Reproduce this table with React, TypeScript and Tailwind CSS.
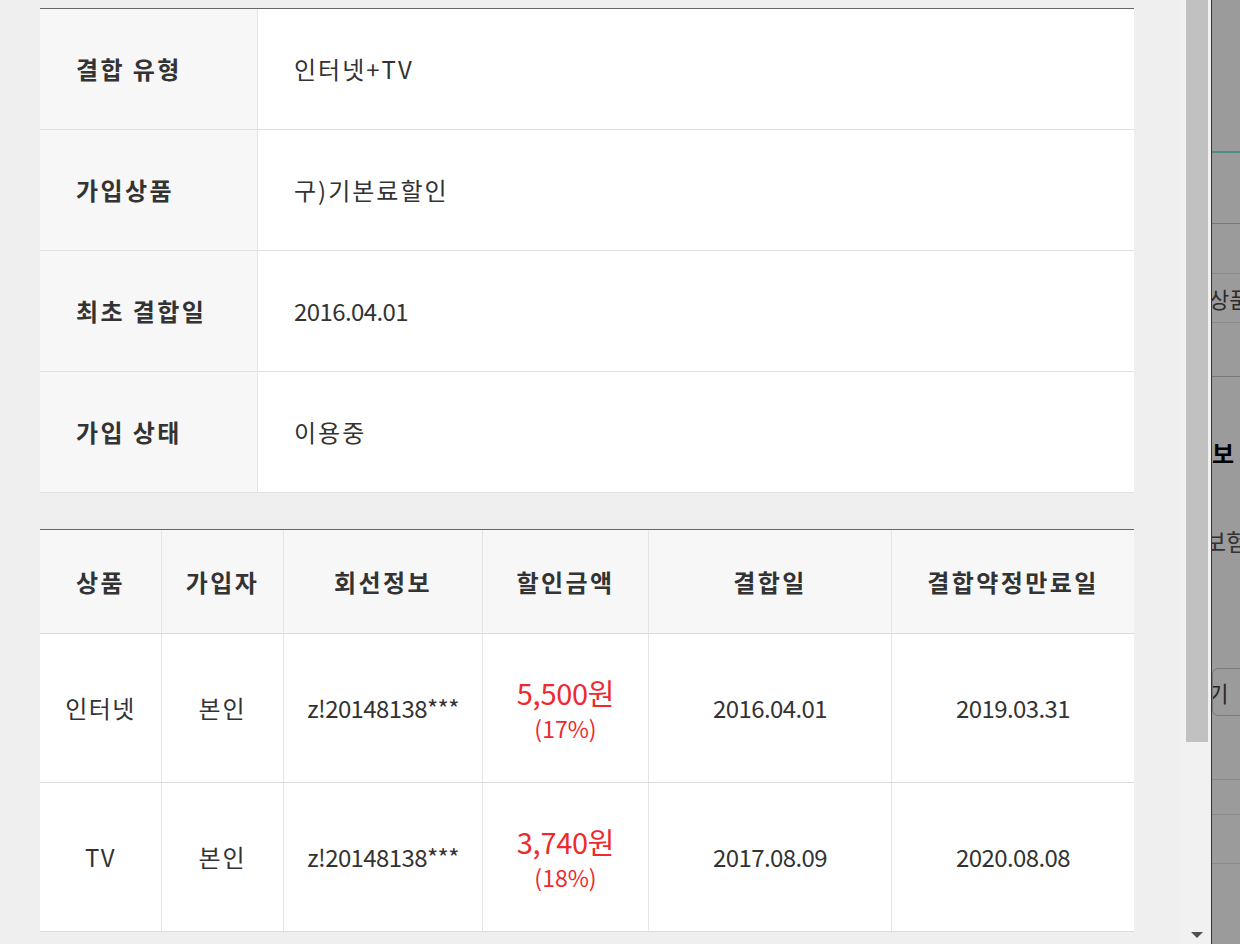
import React from "react";

const font = { fontFamily: '"Noto Sans CJK KR", "Noto Sans", sans-serif' };

type InfoRow = { label: string; value: string; numeric?: boolean };

const infoRows: InfoRow[] = [
  { label: "결합 유형", value: "인터넷+TV" },
  { label: "가입상품", value: "구)기본료할인" },
  { label: "최초 결합일", value: "2016.04.01", numeric: true },
  { label: "가입 상태", value: "이용중" },
];

type LineRow = {
  product: string;
  owner: string;
  line: string;
  amount: string;
  rate: string;
  joined: string;
  expires: string;
};

const lineRows: LineRow[] = [
  {
    product: "인터넷",
    owner: "본인",
    line: "z!20148138***",
    amount: "5,500원",
    rate: "(17%)",
    joined: "2016.04.01",
    expires: "2019.03.31",
  },
  {
    product: "TV",
    owner: "본인",
    line: "z!20148138***",
    amount: "3,740원",
    rate: "(18%)",
    joined: "2017.08.09",
    expires: "2020.08.08",
  },
];

const headers = ["상품", "가입자", "회선정보", "할인금액", "결합일", "결합약정만료일"];
const cols = "grid grid-cols-[121px_122px_199px_166px_243px_243px]";
const cell = "flex items-center justify-center border-l border-[#e5e5e5]";

function InfoTable() {
  return (
    <div className="border-t border-[#666] bg-white">
      {infoRows.map((r) => (
        <div key={r.label} className="flex h-[121px] border-b border-[#e0e0e0]">
          <div className="flex w-[218px] items-center border-r border-[#e5e5e5] bg-[#f7f7f7] pl-[36px] text-[24px] font-bold tracking-[2.4px] text-[#333]">
            {r.label}
          </div>
          <div
            className={`flex flex-1 items-center pl-[36px] text-[24px] text-[#333] ${
              r.numeric ? "tracking-[-0.6px]" : "tracking-[2px]"
            }`}
          >
            {r.value}
          </div>
        </div>
      ))}
    </div>
  );
}

function LineTable() {
  return (
    <div className="mt-[36px] border-t border-[#666] bg-white">
      <div className={`${cols} h-[104px] border-b border-[#dcdcdc] bg-[#f7f7f7]`}>
        {headers.map((h, i) => (
          <div
            key={h}
            className={`flex items-center justify-center text-[24px] font-bold tracking-[2.4px] text-[#333] ${
              i > 0 ? "border-l border-[#e5e5e5]" : ""
            }`}
          >
            {h}
          </div>
        ))}
      </div>
      {lineRows.map((r) => (
        <div key={r.product} className={`${cols} h-[149px] border-b border-[#dcdcdc] text-[24px] text-[#333]`}>
          <div className="flex items-center justify-center tracking-[1.5px]">{r.product}</div>
          <div className={`${cell} tracking-[2px]`}>{r.owner}</div>
          <div className={`${cell} tracking-[-0.6px]`}>{r.line}</div>
          <div className="flex flex-col items-center justify-center border-l border-[#e5e5e5] text-[#ee2a2f]">
            <div className="text-[29px] leading-[34px] tracking-[-0.3px]">{r.amount}</div>
            <div className="mt-[5px] text-[23px] leading-[28px]">{r.rate}</div>
          </div>
          <div className={`${cell} tracking-[-0.6px]`}>{r.joined}</div>
          <div className={`${cell} tracking-[-0.6px]`}>{r.expires}</div>
        </div>
      ))}
    </div>
  );
}

function Scrollbar() {
  return (
    <div className="flex w-[31px] flex-col justify-between bg-[#f1f1f1]">
      <div className="ml-[6px] h-[742px] w-[22px] bg-[#c1c1c1]" />
      <div className="mb-[6px] ml-[11px] h-0 w-0 border-x-[6px] border-t-[6px] border-x-transparent border-t-[#505050]" />
    </div>
  );
}

function BehindPage() {
  return (
    <div className="w-[29px] overflow-hidden border-l border-[#333] bg-[#9b9b9b] text-[#222]">
      <div className="h-[151px]" />
      <div className="h-[2px] bg-[#4f8c84]" />
      <div className="h-[70px]" />
      <div className="h-px bg-[#777]" />
      <div className="h-[49px]" />
      <div className="h-px bg-[#8a8a8a]" />
      <div className="flex h-[48px] items-center whitespace-nowrap">
        <span className="-ml-[3px] text-[22px] leading-[26px] text-[#2c2c2c]">상품</span>
      </div>
      <div className="h-px bg-[#8a8a8a]" />
      <div className="h-[53px]" />
      <div className="h-px bg-[#777]" />
      <div className="h-[291px] whitespace-nowrap pt-[63px]">
        <div className="text-[24px] font-bold leading-[26px] text-black">보</div>
        <div className="-ml-[8px] mt-[62px] text-[24px] leading-[26px] text-[#333]">보험</div>
      </div>
      <div className="flex h-[48px] w-[60px] items-center overflow-hidden whitespace-nowrap rounded-[6px] border border-[#7a7a7a]">
        <span className="-ml-[25px] text-[22px] leading-[26px] text-[#2a2a2a]">보기</span>
      </div>
      <div className="h-[63px]" />
      <div className="h-px bg-[#8a8a8a]" />
      <div className="h-[34px]" />
      <div className="h-px bg-[#8a8a8a]" />
      <div className="h-[48px]" />
      <div className="h-px bg-[#8a8a8a]" />
    </div>
  );
}

export default function App() {
  return (
    <div className="flex h-[944px] w-[1240px] overflow-hidden bg-[#efefef]" style={font}>
      <div className="w-[1180px] pl-[40px] pt-[8px]">
        <div className="w-[1094px]">
          <InfoTable />
          <LineTable />
        </div>
      </div>
      <Scrollbar />
      <BehindPage />
    </div>
  );
}
